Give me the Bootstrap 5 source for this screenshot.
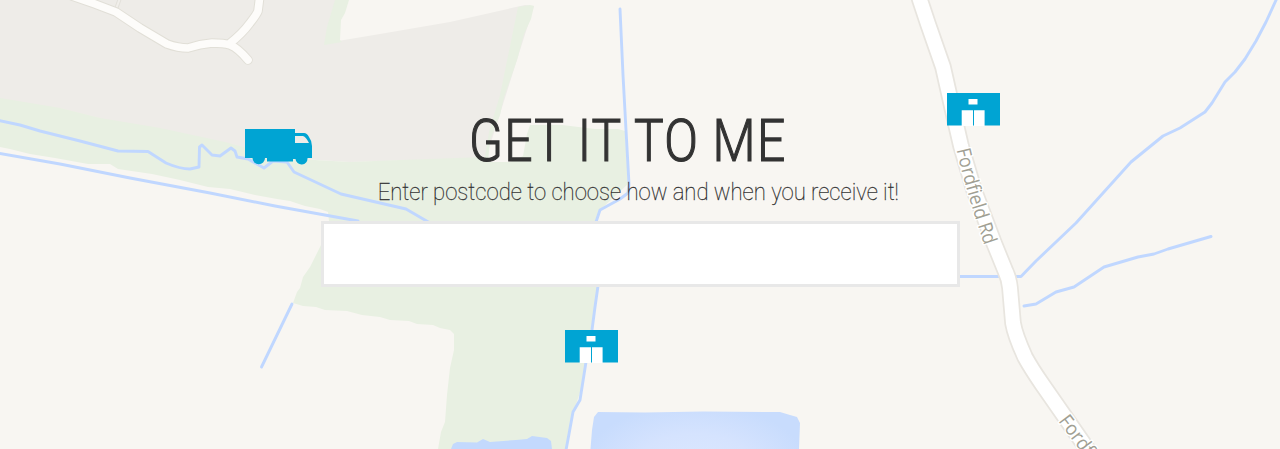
<!DOCTYPE html>
<html lang="en">
<head>
<meta charset="utf-8">
<meta name="viewport" content="width=device-width, initial-scale=1">
<title>Get it to me</title>
<link href="https://cdn.jsdelivr.net/npm/bootstrap@5.3.0/dist/css/bootstrap.min.css" rel="stylesheet">
<style>
  .finder { height: 449px; background: #f8f6f2; color: #333; font-family: Roboto, "Liberation Sans", sans-serif; }
  .finder-panel { width: 639px; padding-top: 106px; }
  .finder-title { font-size: 58.5px; font-weight: 300; line-height: 70px; -webkit-text-stroke: 1.2px #333; white-space: nowrap; }
  .finder-title span { display: inline-block; transform: translateX(-12px) scaleX(.85); letter-spacing: 1.5px; }
  .finder-lead { font-size: 23.5px; font-weight: 100; line-height: 30px; margin-top: 1px; white-space: nowrap; -webkit-text-stroke: .3px #333; }
  .finder-lead span { display: inline-block; transform: translateX(-2px) scaleX(.94); }
  .finder-input { height: 66px; margin-top: 14px; border: 3px solid #e8e8e8; background: #fff; }
  .pin-truck { left: 245px; top: 129px; }
  .pin-north { left: 947px; top: 93px; }
  .pin-south { left: 565px; top: 330px; }
  .road-name { font: 19.5px "Open Sans", Roboto, sans-serif; fill: #a19f93; stroke: #fff; stroke-width: 3px; paint-order: stroke; stroke-linejoin: round; }
</style>
</head>
<body>
<main class="finder position-relative overflow-hidden">
  <svg class="position-absolute top-0 start-0" width="1280" height="449" viewBox="0 0 1280 449" aria-hidden="true">
    <defs>
      <radialGradient id="lake" gradientUnits="userSpaceOnUse" cx="695" cy="470" r="115" gradientTransform="translate(0 190) scale(1 .6)">
        <stop offset="0" stop-color="#dce8ff"/><stop offset=".55" stop-color="#d5e3fe"/><stop offset="1" stop-color="#c8dcfd"/>
      </radialGradient>
      <path id="road" d="M917 -10L920 0L928 24L943 67L952 107L961 146L974 190L994 243L1005 270Q1009 278 1010 288L1013 323Q1015 335 1025 357Q1031 368 1042 384L1081 440L1095 460"/>
      <path id="lane" d="M72 -4L95 4L116 12L140 28L167 44Q178 48 188 48Q200 44 212 43Q224 43 230 45Q238 48 248 60M229 44Q242 34 250 23Q257 14 258 11L260 -5"/>
    </defs>
    <!-- built-up land and woods -->
    <path fill="#eeece8" d="M0 0H338L326 43L380 34L450 22L525 5L534 6L486 158L350 162L240 155L0 108Z"/>
    <path fill="#e8f0e2" d="M335 0H349L345 13L341 20L340 40L342 42L324 45L327 27Z"/>
    <path fill="#e8f0e2" d="M518 7L530 5L534 6L531 19L524 34L517 60L509 83L504 97L500 115L490 140L488 162L510 162L523 156L527 134L530 125L562 125L595 129L618 129L625 131L628 184L600 210L597 221L598 287L592 330L583 384L574 410L566 449H438L441 432L445 422L447 395L450 368L454 350V334L450 330L440 328L433 325L417 324L409 321L390 320L380 317L362 315L347 311L325 310L316 307L303 306L293 303L297 292L300 288L303 277L310 267L321 245V221H329L328 212L320 209L305 206L290 201L277 199L255 195L230 189L208 187L180 180L152 174L118 169L110 164L88 164L55 158L30 154L10 149L0 147V98L60 108L100 118L160 128L225 142L250 149L246 156L350 162L400 160L485 157L489 132L500 95Z"/>
    <!-- residential streets -->
    <g fill="none" stroke-linejoin="round" stroke-linecap="round">
      <path stroke="#e3e1da" stroke-width="4" d="M120 -2L115 12"/>
      <path stroke="#f1efeb" stroke-width="2" d="M120 -2L115 12"/>
      <use href="#lane" stroke="#e1dfd7" stroke-width="9.600"/>
      <use href="#lane" stroke="#fdfcfa" stroke-width="7.600"/>
    </g>
    <!-- streams -->
    <g fill="none" stroke="#c0d7ff" stroke-width="2.9" stroke-linejoin="round" stroke-linecap="round">
      <path d="M-3 120L20 125L40 131L80 141L118 151L148 151.5L166 163Q180 169 190 169L199 167L199.500 147L202 145L212 155L220 156L231 148L235 151L237 157L248 159L264 168L273 161L287 162L294 172L341 194L406 209L430 223"/>
      <path d="M-3 153L60 164L130 178L210 193L275 206L358 221"/>
      <path d="M620 9L623 75L626 130L629 184L628 193L620 199L600 210L596 222M598 286L595 307L592 330L586 362L580 400L573 412L569 434L566 450"/>
      <path d="M292 304L261.500 367"/>
      <path d="M955 276.500H1021L1036 261L1076 223L1131 162L1147 149L1163 136L1180 128L1205 112L1212 103L1225 82L1235 72L1245 59L1256 41L1266 22L1277 -2"/>
      <path d="M1024 306L1036 304L1056 292L1074 287L1104 267L1138 257L1154 254L1168 249L1211 236.500"/>
    </g>
    <path fill="#c3d9fd" d="M451 449L453 444L457 442L477 442.500L483 439L490 442L516 440L527 439L532 436L547 438L551 441L552 449Z"/>
    <path fill="url(#lake)" d="M590.500 449L592 430L594 417L598 412L645 412.500L703 411.500L780 412L790 415L797 417L800 423L799 449Z"/>
    <!-- main road -->
    <g fill="none" stroke-linejoin="round">
      <use href="#road" stroke="#e8e5df" stroke-width="17.500"/>
      <use href="#road" stroke="#fff" stroke-width="14"/>
    </g>
    <path id="name-a" fill="none" d="M956.500 150Q966 192 987 253"/>
    <path id="name-b" fill="none" d="M1058 421L1103 481"/>
    <text class="road-name"><textPath href="#name-a" textLength="100" lengthAdjust="spacingAndGlyphs">Fordfield Rd</textPath></text>
    <text class="road-name"><textPath href="#name-b" textLength="45" lengthAdjust="spacingAndGlyphs">Fordf</textPath></text>
  </svg>

  <svg class="pin-truck position-absolute" width="68" height="36" viewBox="0 0 68 36" role="img" aria-label="Delivery truck">
    <path fill="#00a4d3" d="M0 0H50V4H59Q62 4 64 8Q67 12 67 17V29H62.500A6 6 0 0 1 50.500 30H48V32.500H22V29H20A6 6 0 0 1 7.500 29H0Z"/>
    <path fill="#eeece8" d="M50 7H58Q61 8 64 14H50Z"/>
  </svg>
  <svg class="pin-north position-absolute" width="53" height="33" viewBox="0 0 53 33" role="img" aria-label="Store">
    <path id="store" fill="#00a4d3" d="M0 0H53V32.500H0Z"/>
    <path id="store-doors" fill="#fff" d="M21.500 6H30.500V11.500H21.500ZM14.700 17.200H26V33H14.700ZM27 17.200H37.600V33H27Z"/>
  </svg>
  <svg class="pin-south position-absolute" width="53" height="33" viewBox="0 0 53 33" role="img" aria-label="Store">
    <use href="#store"/><use href="#store-doors"/>
  </svg>

  <form class="finder-panel position-relative d-flex flex-column mx-auto text-center">
    <h1 class="finder-title mb-0"><span>GET IT TO ME</span></h1>
    <p class="finder-lead mb-0"><span>Enter postcode to choose how and when you receive it!</span></p>
    <input class="finder-input form-control rounded-0 shadow-none" type="text" aria-label="Postcode">
  </form>
</main>
<script src="https://cdn.jsdelivr.net/npm/bootstrap@5.3.0/dist/js/bootstrap.bundle.min.js"></script>
</body>
</html>
